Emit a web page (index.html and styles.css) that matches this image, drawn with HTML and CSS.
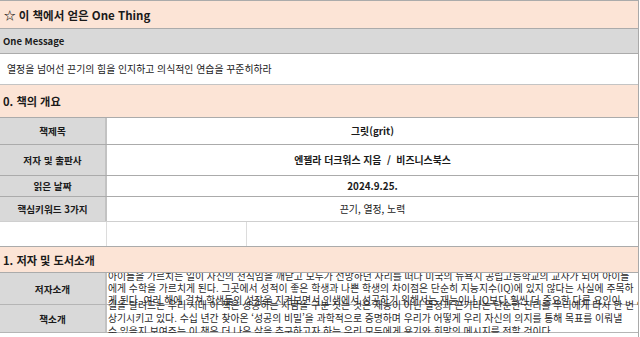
FILE: index.html
```html
<!DOCTYPE html>
<html lang="ko">
<head>
<meta charset="utf-8">
<link rel="stylesheet" href="styles.css">
</head>
<body>
<div class="sheet">
  <div class="row title r1"><span>☆ 이 책에서 얻은 One Thing</span></div>
  <div class="row sub r2"><span>One Message</span></div>
  <div class="row plain r3"><span>열정을 넘어선 끈기의 힘을 인지하고 의식적인 연습을 꾸준히하라</span></div>
  <div class="row section r4"><span>0. 책의 개요</span></div>
  <div class="row info r5"><div class="label">책제목</div><div class="value strong">그릿(grit)</div></div>
  <div class="row info r6"><div class="label">저자 및 출판사</div><div class="value strong">엔젤라 더크워스 지음 &nbsp;/&nbsp; 비즈니스북스</div></div>
  <div class="row info r7"><div class="label">읽은 날짜</div><div class="value strong">2024.9.25.</div></div>
  <div class="row info r8"><div class="label">핵심키워드 3가지</div><div class="value">끈기, 열정, 노력</div></div>
  <div class="row blank r9"><div class="bcell c1"></div><div class="bcell c2"></div><div class="bcell c3"></div></div>
  <div class="row section r10"><span>1. 저자 및 도서소개</span></div>
  <div class="row info long r11">
    <div class="label">저자소개</div>
    <div class="value para lh12">
      <div class="lines">
        <div>아이들을 가르치는 일이 자신의 천직임을 깨닫고 모두가 선망하던 자리를 떠나 미국의 뉴욕시 공립고등학교의 교사가 되어 아이들</div>
        <div>에게 수학을 가르치게 된다. 그곳에서 성적이 좋은 학생과 나쁜 학생의 차이점은 단순히 지능지수(IQ)에 있지 않다는 사실에 주목하</div>
        <div>게 된다. 여러 해에 걸쳐 학생들의 성장을 지켜보면서 인생에서 성공하기 위해서는 재능이나 IQ보다 훨씬 더 중요한 다른 요인이</div>
      </div>
    </div>
  </div>
  <div class="row info long r12">
    <div class="label">책소개</div>
    <div class="value para lh13">
      <div class="lines">
        <div>길을 달려드는 우리 시대 이 책은 성공하는 사람을 구분 짓는 것은 재능이 아닌 열정과 끈기라는 단순한 진리를 우리에게 다시 한 번 인</div>
        <div>상기시키고 있다. 수십 년간 찾아온 ‘성공의 비밀’을 과학적으로 증명하며 우리가 어떻게 우리 자신의 의지를 통해 목표를 이뤄낼</div>
        <div>수 있을지 보여주는 이 책은 더 나은 삶을 추구하고자 하는 우리 모두에게 용기와 희망의 메시지를 전할 것이다.</div>
      </div>
    </div>
  </div>
  <div class="row tail"></div>
</div>
</body>
</html>
```

FILE: styles.css
```css
html, body {
  margin: 0;
  padding: 0;
  background: #ffffff;
}

body {
  font-family: "Noto Sans CJK KR", "Noto Sans", sans-serif;
  color: #1a1a1a;
  width: 640px;
  height: 337px;
  overflow: hidden;
}

.sheet {
  width: 638px;
  border-right: 1px solid #a9a9a9;
}

.row {
  display: flex;
  align-items: center;
  border-bottom: 1px solid #ababab;
  box-sizing: content-box;
  position: relative;
}

.title {
  border-top: 1px solid #ababab;
  height: 27px;
  background: #fce4d6;
  padding-left: 4px;
  font-size: 11.5px;
  font-weight: 700;
  z-index: 2;
}

.sub {
  height: 24px;
  background: #d9d9d9;
  padding-left: 3px;
  font-size: 9.5px;
  font-weight: 700;
}

.plain {
  height: 30px;
  background: #ffffff;
  padding-left: 7px;
  font-size: 9.9px;
  border-bottom-color: #c4c4c4;
}

.section {
  height: 32px;
  background: #fce4d6;
  padding-left: 3px;
  font-size: 11.2px;
  font-weight: 700;
  z-index: 2;
}

.info {
  align-items: stretch;
  font-size: 9.6px;
}

.r5 { height: 26px; }
.r6 { height: 30px; }
.r7 { height: 20px; }
.r8 { height: 24px; border-bottom-color: #cfcfcf; }
.r10 { height: 25px; }
.r11 { height: 31px; border-bottom-color: #b5b5b5; }
.r12 { height: 27px; border-bottom-color: #b5b5b5; }

.label {
  width: 105px;
  flex: none;
  background: #d9d9d9;
  border-right: 2px solid #c2c2c2;
  display: flex;
  align-items: center;
  justify-content: center;
  font-weight: 700;
}

.value {
  flex: 1;
  display: flex;
  align-items: center;
  justify-content: center;
  min-width: 0;
  font-size: 9.9px;
}

.strong {
  font-weight: 700;
}

.blank {
  height: 24px;
  align-items: stretch;
  border-bottom-color: #ababab;
}

.bcell {
  border-right: 1px solid #dcdcdc;
}

.c1 { width: 106px; }
.c2 { width: 139px; }
.c3 { flex: 1; border-right: none; }

.long {
  z-index: 1;
}

.para {
  justify-content: flex-start;
  padding-left: 1px;
  overflow-x: clip;
  overflow-y: visible;
  color: #2a2a2a;
  font-size: 9.85px;
}

.lines {
  white-space: nowrap;
}

.lh12 { padding-bottom: 2px; }
.lh12 .lines { line-height: 12px; }
.lh13 .lines { line-height: 13px; }

.tail {
  height: 10px;
  background: #ffffff;
  border-bottom: none;
  z-index: 3;
}
```
